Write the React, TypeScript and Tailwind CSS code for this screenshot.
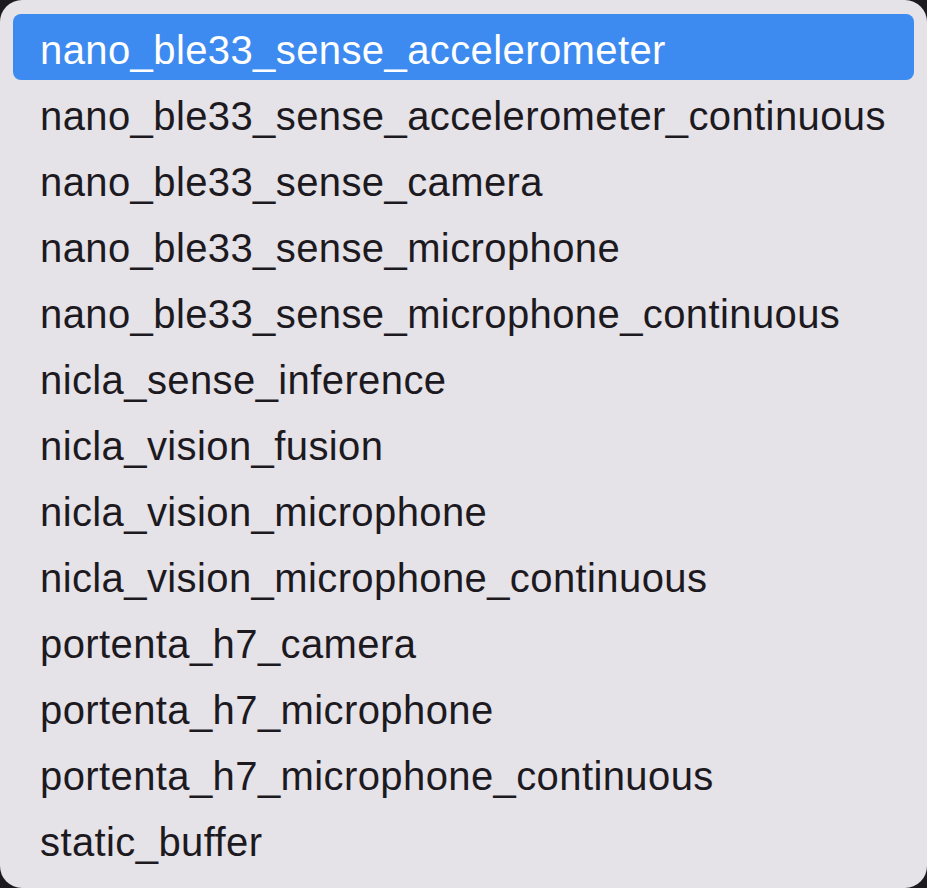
import React from 'react'

const items = [
  'nano_ble33_sense_accelerometer',
  'nano_ble33_sense_accelerometer_continuous',
  'nano_ble33_sense_camera',
  'nano_ble33_sense_microphone',
  'nano_ble33_sense_microphone_continuous',
  'nicla_sense_inference',
  'nicla_vision_fusion',
  'nicla_vision_microphone',
  'nicla_vision_microphone_continuous',
  'portenta_h7_camera',
  'portenta_h7_microphone',
  'portenta_h7_microphone_continuous',
  'static_buffer',
]

export default function App() {
  return (
    <div className="w-[927px] h-[888px] bg-[#1c1a1e]">
      <div className="w-full h-full bg-[#e5e2e8] rounded-[22px] pt-[14px] px-[13px] overflow-hidden">
        {items.map((name, i) => (
          <div
            key={name}
            className={`h-[66px] flex items-center pl-[27px] pt-[6px] rounded-[8px] text-[40px] leading-none tracking-[0.4px] ${
              i === 0 ? 'bg-[#3d8bf0] text-white' : 'text-[#1d1a1f]'
            }`}
            style={{ fontFamily: '"Liberation Sans", Arial, sans-serif' }}
          >
            {name}
          </div>
        ))}
      </div>
    </div>
  )
}
